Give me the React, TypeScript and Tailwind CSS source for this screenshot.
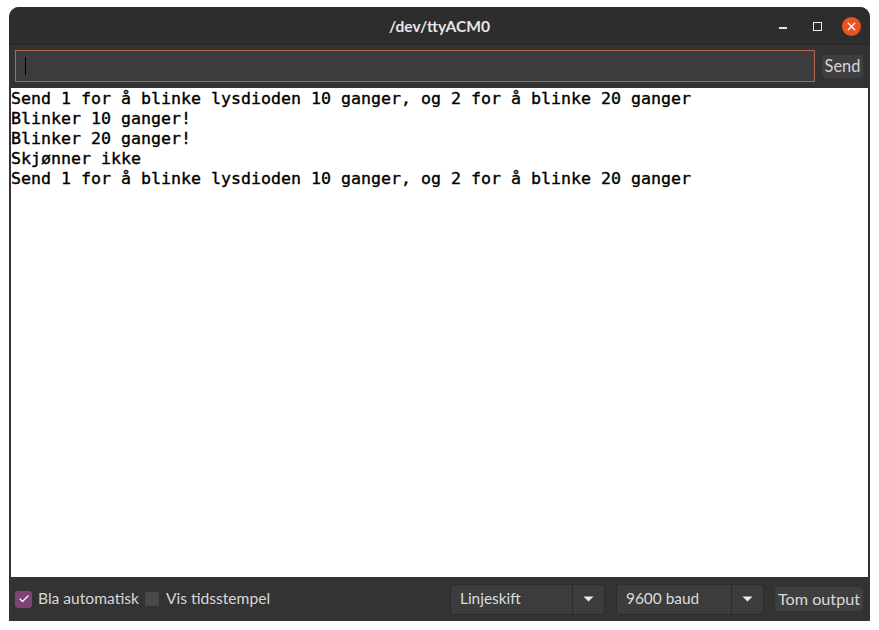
import React from 'react';
import { Check, X } from 'lucide-react';

const UI_FONT = "font-['Lato','Noto_Sans',sans-serif]";

const LINES = [
  'Send 1 for å blinke lysdioden 10 ganger, og 2 for å blinke 20 ganger',
  'Blinker 10 ganger!',
  'Blinker 20 ganger!',
  'Skjønner ikke',
  'Send 1 for å blinke lysdioden 10 ganger, og 2 for å blinke 20 ganger',
];

const Select = ({ label, width }: { label: string; width: string }) => (
  <div className={`flex h-[31px] ${width} rounded-[4px] border border-[#2b2b2b] bg-[#3c3c3c]`}>
    <span className="flex-1 pl-[9px] text-[15.4px] leading-[26px] text-[#dcdcdc]">{label}</span>
    <span className="flex w-[32px] items-center justify-center border-l border-[#2b2b2b]">
      <svg width="11" height="6" viewBox="0 0 11 6">
        <path d="M0.5 0.5H10.5L5.5 5.5Z" fill="#eeeeee" />
      </svg>
    </span>
  </div>
);

export default function App() {
  return (
    <div className={`h-[630px] w-[879px] bg-white pb-[9px] pl-[9px] pr-[9px] pt-[7px] ${UI_FONT}`}>
      <div className="flex h-[614px] w-[861px] flex-col overflow-hidden rounded-t-[10px] bg-[#333333]">
        {/* title bar */}
        <div className="relative flex h-[38px] shrink-0 items-center justify-center border-b border-[#262626] bg-[#2d2d2d]">
          <span className="mt-[2px] text-[15.6px] font-bold text-[#e6e6e6]">/dev/ttyACM0</span>
          <div className="absolute left-[770px] top-[10px] flex items-start">
            <span className="mt-[10px] h-[2px] w-[8px] bg-[#e6e6e6]" />
            <span className="ml-[26px] mt-[5px] h-[9px] w-[9px] border border-[#eeeeee]" />
            <span className="ml-[20px] flex h-[19px] w-[19px] items-center justify-center rounded-full bg-[#e95420]">
              <X size={13} strokeWidth={2.5} color="#ffffff" />
            </span>
          </div>
        </div>

        {/* send row */}
        <div className="flex h-[43px] shrink-0 items-start gap-[7px] pl-[6px] pr-[7px] pt-[5px]">
          <div className="flex h-[32px] flex-1 items-center border border-[#b4664a] bg-[#3c3c3c] pl-[9px]">
            <span className="h-[18px] w-px bg-black" />
          </div>
          <span className="mt-[5px] flex h-[23px] w-[41px] items-center justify-center rounded-[4px] bg-[#3f3f3f] text-[16.4px] text-[#d6d6d6]">
            Send
          </span>
        </div>

        {/* output */}
        <div className="mx-[2px] flex-1 bg-white pt-[1px] font-['DejaVu_Sans_Mono',monospace] text-[16.63px] font-normal leading-[20px] text-black [-webkit-text-stroke:0.35px_#000]">
          {LINES.map((line, i) => (
            <div key={i} className="whitespace-pre">
              {line}
            </div>
          ))}
        </div>

        {/* footer */}
        <div className="flex h-[44px] shrink-0 items-center bg-[#333333] pl-[6px] pr-[7px] text-[15.6px] text-[#d8d8d8]">
          <span className="flex h-[17px] w-[17px] items-center justify-center rounded-[3px] bg-[#7f4474]">
            <Check size={12} strokeWidth={2.5} color="#ffffff" />
          </span>
          <span className="ml-[6px]">Bla automatisk</span>
          <span className="ml-[6px] h-[14px] w-[14px] rounded-[2px] bg-[#4a4a4a]" />
          <span className="ml-[7px]">Vis tidsstempel</span>
          <div className="ml-auto flex items-center">
            <Select label="Linjeskift" width="w-[155px]" />
            <div className="w-[11px]" />
            <Select label="9600 baud" width="w-[148px]" />
            <span className="ml-[11px] flex h-[24px] w-[88px] items-center justify-center rounded-[4px] bg-[#3f3f3f] text-[16.2px]">
              Tom output
            </span>
          </div>
        </div>
      </div>
    </div>
  );
}
